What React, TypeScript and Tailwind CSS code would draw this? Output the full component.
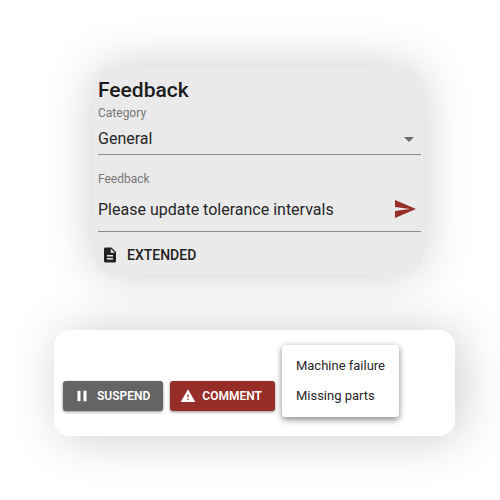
import React, { useState } from 'react'
import { MdArrowDropDown, MdDescription, MdPause, MdSend, MdWarning } from 'react-icons/md'
import { clsx } from 'clsx'

interface ActionButtonProps {
  icon: React.ReactNode
  children: React.ReactNode
  className?: string
}

function ActionButton({ icon, children, className }: ActionButtonProps) {
  return (
    <button
      type="button"
      className={clsx(
        'mb-1.5 flex h-[30px] shrink-0 items-center gap-1.5 rounded-[3px] pl-2.5 pr-[13px] text-xs font-semibold text-white',
        'shadow-[0_1px_3px_rgba(0,0,0,0.45)]',
        className
      )}
    >
      {icon}
      {children}
    </button>
  )
}

function FeedbackCard() {
  const [category, setCategory] = useState('General')
  const [message, setMessage] = useState('Please update tolerance intervals')

  return (
    <form
      onSubmit={(e) => e.preventDefault()}
      className="ml-[94px] mr-[77px] rounded-[20px] bg-[#eaeaea] pb-[3px] pl-1 pr-0.5 pt-[9px] shadow-[0_0_50px_rgba(0,0,0,0.2)]"
    >
      <h1 className="text-[21px] leading-7 font-medium text-[#1c1c1c]">Feedback</h1>

      {/* Category */}
      <label htmlFor="category" className="mt-px block text-xs text-[#777]">
        Category
      </label>
      <div className="relative border-b border-[#8c8c8c]">
        <select
          id="category"
          value={category}
          onChange={(e) => setCategory(e.target.value)}
          className="block h-[33px] w-full appearance-none bg-transparent pr-7 pt-0.5 text-base text-[#272727] outline-none"
        >
          <option>General</option>
          <option>Other</option>
        </select>
        <MdArrowDropDown className="pointer-events-none absolute right-0 top-1.5 size-6 text-[#6b6b6b]" />
      </div>

      {/* Message */}
      <label htmlFor="message" className="mt-4 block text-xs text-[#777]">
        Feedback
      </label>
      <div className="flex h-[45px] items-center border-b border-[#8c8c8c] pr-1">
        <input
          id="message"
          type="text"
          value={message}
          onChange={(e) => setMessage(e.target.value)}
          className="h-8 min-w-0 flex-1 bg-transparent text-base text-[#272727] outline-none"
        />
        <button type="submit" aria-label="Send feedback" className="text-[#962d27]">
          <MdSend className="size-6" />
        </button>
      </div>

      <button type="button" className="mt-[7px] flex h-8 items-center gap-2 pl-[3px] text-sm font-medium text-[#222]">
        <MdDescription className="size-[18px]" />
        EXTENDED
      </button>
    </form>
  )
}

function ActionsCard() {
  return (
    <section className="ml-[54px] mr-[45px] flex items-end gap-[7px] rounded-2xl bg-white pb-[19px] pl-[9px] pt-[15px] shadow-[6px_2px_50px_rgba(0,0,0,0.2)]">
      <ActionButton icon={<MdPause className="size-[18px]" />} className="bg-[#646464]">
        SUSPEND
      </ActionButton>
      <ActionButton icon={<MdWarning className="size-4" />} className="bg-[#962d27]">
        COMMENT
      </ActionButton>
      <ul
        role="menu"
        className="rounded-[3px] bg-white py-1.5 text-[13px] text-[#272727] shadow-[0_3px_6px_rgba(0,0,0,0.4),0_0_6px_rgba(0,0,0,0.12)]"
      >
        {['Machine failure', 'Missing parts'].map((reason) => (
          <li key={reason} role="none">
            <button type="button" role="menuitem" className="block h-[30px] w-full px-3.5 text-left">
              {reason}
            </button>
          </li>
        ))}
      </ul>
    </section>
  )
}

export default function App() {
  return (
    <main className="flex min-h-screen flex-col gap-14 bg-white pb-16 pt-[67px] font-['Roboto',sans-serif]">
      <FeedbackCard />
      <ActionsCard />
    </main>
  )
}
